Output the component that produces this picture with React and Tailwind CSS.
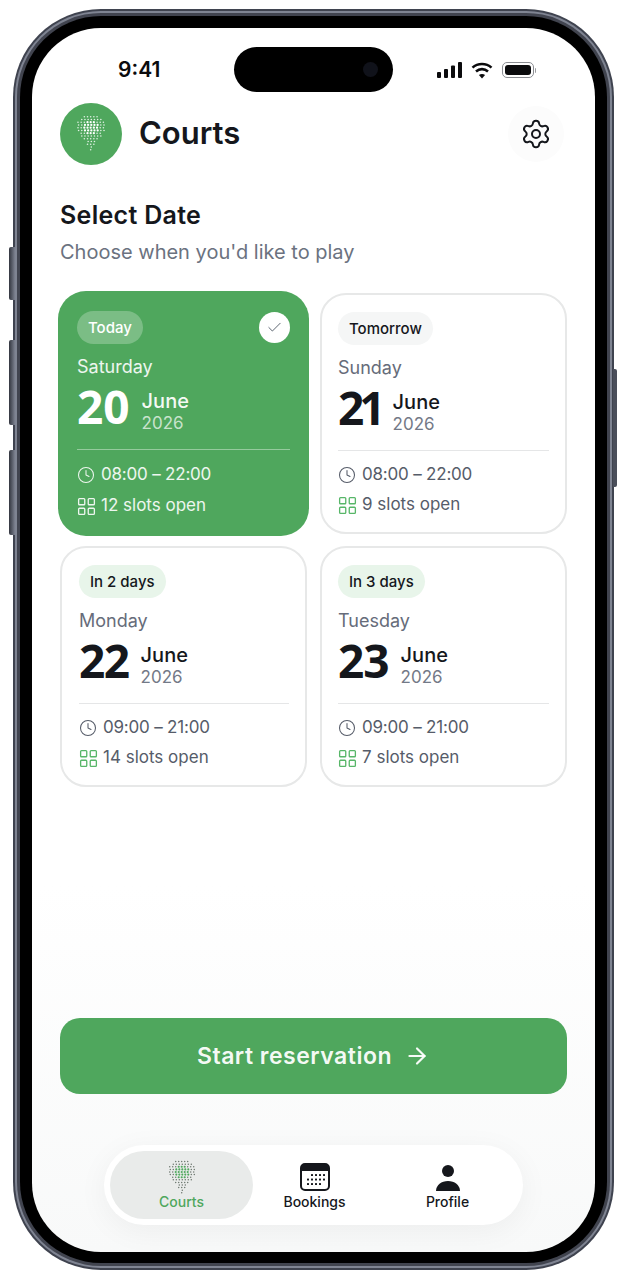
import { Settings, Clock, LayoutGrid, ArrowRight, Check } from 'lucide-react';

const days = [
  { badge: 'Today', weekday: 'Saturday', day: '20', hours: '08:00 – 22:00', slots: '12 slots open', selected: true, track: 'tracking-normal' },
  { badge: 'Tomorrow', weekday: 'Sunday', day: '21', hours: '08:00 – 22:00', slots: '9 slots open', neutral: true, pad: 'px-[16px]', track: 'tracking-[-5px]' },
  { badge: 'In 2 days', weekday: 'Monday', day: '22', hours: '09:00 – 21:00', slots: '14 slots open', pad: 'pl-[17px] pr-[16px]', track: 'tracking-[-1.500px]' },
  { badge: 'In 3 days', weekday: 'Tuesday', day: '23', hours: '09:00 – 21:00', slots: '7 slots open', pad: 'px-[16px]', track: 'tracking-[-1px]' },
];

// rows of the dotted racket logo: half-width of each row
const rows = [2, 3, 4, 4, 4, 4, 3, 3, 2, 1, 1, 0, 0];

function RacketDots({ className, color, core }) {
  const dots = [];
  rows.forEach((half, r) => {
    for (let c = -half; c <= half; c += 1) {
      const inner = Math.hypot(c, r - 4) < 2.6;
      dots.push(
        <circle
          key={`${r}-${c}`}
          cx={14 + c * 3 + (r % 2) * 0.6 - 0.3}
          cy={1.6 + r * 2.6}
          r={inner ? 1.05 : 0.75}
          fill={inner ? core : color}
        />
      );
    }
  });
  return (
    <svg viewBox="0 0 28 34" className={className}>
      {dots}
    </svg>
  );
}

function DayCard({ d }) {
  const sel = d.selected;
  const badge = sel
    ? 'bg-white/25 text-white'
    : d.neutral
      ? 'bg-[#f5f6f6] text-[#15171c]'
      : 'bg-[#e8f5ea] text-[#15171c]';
  return (
    <div
      className={
        sel
          ? '-mx-[2px] -my-[2px] h-[245px] rounded-[28px] bg-[#4fa75d] px-[19px] pt-[20px] text-white'
          : `h-[241px] rounded-[26px] border-2 border-[#e7e8e8] bg-white pt-[17px] ${d.pad}`
      }
    >
      <div className="flex h-[33px] items-center justify-between">
        <span className={`rounded-full px-[11px] py-[7px] text-[15px] leading-[19px] font-medium ${badge}`}>{d.badge}</span>
        {sel && (
          <span className="flex h-[31px] w-[31px] items-center justify-center rounded-full bg-white">
            <Check size={17} strokeWidth={1.4} className="text-[#5b6470]" />
          </span>
        )}
      </div>
      <p className={`mt-[11px] text-[18px] leading-[24px] ${sel ? 'text-white/90' : 'text-[#666c7a]'}`}>{d.weekday}</p>
      <div className="mt-[2px] flex h-[55px] items-center gap-[12px]">
        <span className={`-mt-[6px] font-['Open_Sans',sans-serif] text-[46px] leading-none font-bold ${d.track} ${sel ? 'text-white' : 'text-[#15171c]'}`}>{d.day}</span>
        <div className="pt-[7px]">
          <p className={`text-[20px] leading-[21px] font-medium ${sel ? 'text-white/95' : 'text-[#15171c]'}`}>June</p>
          <p className={`text-[17px] leading-[22px] ${sel ? 'text-white/70' : 'text-[#737987]'}`}>2026</p>
        </div>
      </div>
      <div className={`mt-[13px] h-px ${sel ? 'bg-white/40' : 'bg-[#e5e6e7]'}`} />
      <div className={`flex h-[24px] items-center gap-[6px] text-[17px] tracking-[-0.2px] ${sel ? 'mt-[13px] text-white/90' : 'mt-[12px] text-[#565c69]'}`}>
        <Clock size={18} strokeWidth={1.4} />
        <span>{d.hours}</span>
      </div>
      <div className={`flex h-[24px] items-center gap-[4px] text-[17px] ${sel ? 'mt-[7px] text-white/90' : 'mt-[6px] text-[#565c69]'}`}>
        <LayoutGrid size={21} strokeWidth={1.5} className={sel ? '-ml-[1px] text-white/90' : '-ml-[1px] text-[#57b668]'} />
        <span>{d.slots}</span>
      </div>
    </div>
  );
}

function StatusIcons() {
  return (
    <div className="flex items-center gap-[9px]">
      <svg width="25" height="16" viewBox="0 0 25 16" fill="#0b0b0d">
        <rect x="0" y="10" width="4" height="6" rx="1" />
        <rect x="7" y="7" width="4" height="9" rx="1" />
        <rect x="14" y="3.5" width="4" height="12.5" rx="1" />
        <rect x="21" y="0" width="4" height="16" rx="1" />
      </svg>
      <svg width="22" height="17" viewBox="0 0 22 17" fill="none" stroke="#0b0b0d" strokeWidth="2.6">
        <path d="M1.5 5.6C6.8 .8 15.200 .8 20.500 5.600" />
        <path d="M5 9.400c3.500-3 8.500-3 12 0" />
        <path d="M11 16.500 7.900 13.100c1.800-1.400 4.400-1.400 6.200 0z" fill="#0b0b0d" stroke="none" />
      </svg>
      <div className="flex items-center gap-px">
        <div className="h-[16px] w-[32px] rounded-[5px] border border-[#8b8d92] p-[2px]">
          <div className="h-full w-full rounded-[3px] bg-[#0b0b0d]" />
        </div>
        <div className="h-[5px] w-[1.500px] rounded-r-full bg-[#9a9ca0]" />
      </div>
    </div>
  );
}

function CalendarIcon() {
  return (
    <svg width="30" height="28" viewBox="0 0 30 28">
      <rect x="1" y="1" width="28" height="26" rx="4" fill="#fff" stroke="#15171c" strokeWidth="2" />
      <path d="M1 5a4 4 0 0 1 4-4h20a4 4 0 0 1 4 4v3H1z" fill="#15171c" />
      {[[12, 12], [16, 12], [20, 12], [24, 12], [8, 16.500], [12, 16.500], [16, 16.500], [20, 16.500], [24, 16.500], [8, 21], [12, 21], [16, 21], [20, 21]].map(([x, y]) => (
        <rect key={`${x}-${y}`} x={x - 1} y={y - 1} width="2" height="2" rx="0.5" fill="#15171c" />
      ))}
    </svg>
  );
}

function PersonIcon() {
  return (
    <svg width="26" height="27" viewBox="0 0 26 27" fill="#15171c">
      <circle cx="13" cy="7" r="6" />
      <path d="M1 27c0-6 5.500-10 12-10s12 4 12 10z" />
    </svg>
  );
}

function SideButton({ className }) {
  return <div className={`absolute w-[6px] rounded-l-[2px] bg-gradient-to-r from-[#33363f] to-[#7d8290] ${className}`} />;
}

export default function App() {
  return (
    <div className="min-h-[1280px] bg-white pt-[9px] pl-[13px] font-['Inter','Liberation_Sans',sans-serif]">
      <div className="relative h-[1261px] w-[601px] rounded-[88px] bg-[#3f434f] p-[2px]">
        <SideButton className="top-[238px] -left-[4px] h-[53px]" />
        <SideButton className="top-[331px] -left-[4px] h-[85px]" />
        <SideButton className="top-[441px] -left-[4px] h-[85px]" />
        <div className="absolute top-[360px] -right-[3px] h-[118px] w-[4px] rounded-r-[2px] bg-[#4a4e5a]" />

        <div className="h-full w-full rounded-[86px] bg-[#7f8492] p-[2px]">
          <div className="h-full w-full rounded-[84px] bg-[#41444f] p-[3px]">
            <div className="h-full w-full rounded-[81px] bg-black p-[12px] pb-[11px]">
              <div className="relative flex h-full flex-col overflow-hidden rounded-[69px] bg-gradient-to-b from-white from-70% to-[#f8f9f9] px-[28px]">
                {/* dynamic island */}
                <div className="absolute top-[19px] left-[202px] flex h-[45px] w-[159px] items-center justify-end rounded-full bg-black pr-[15px]">
                  <div className="h-[15px] w-[15px] rounded-full bg-[#10121a]" />
                </div>

                <div className="mt-[26px] flex h-[32px] items-center justify-between pr-[31px] pl-[58px]">
                  <span className="text-[21px] font-semibold text-[#0b0b0d]">9:41</span>
                  <StatusIcons />
                </div>

                <div className="mt-[17px] flex items-center justify-between">
                  <div className="flex items-center gap-[17px]">
                    <div className="flex h-[62px] w-[62px] items-center justify-center rounded-full bg-[#4fa75d]">
                      <RacketDots className="mb-[3px] h-[36px] w-[30px]" color="#e2f1e5" core="#ffffff" />
                    </div>
                    <h1 className="pb-[2px] text-[31px] font-semibold text-[#15171c]">Courts</h1>
                  </div>
                  <div className="mr-[3px] flex h-[56px] w-[56px] items-center justify-center rounded-full bg-[#fcfcfc]">
                    <Settings size={32} strokeWidth={1.5} className="text-[#15171c]" />
                  </div>
                </div>

                <h2 className="mt-[34px] text-[25px] leading-[32px] font-semibold tracking-[0.3px] text-[#15171c]">Select Date</h2>
                <p className="mt-[7px] text-[20px] leading-[28px] text-[#6b7280]">Choose when you'd like to play</p>

                <div className="mt-[27px] grid grid-cols-2 gap-x-[13px] gap-y-[12px]">
                  {days.map((d) => (
                    <DayCard key={d.day} d={d} />
                  ))}
                </div>

                <button className="mt-[231px] flex h-[76px] w-full items-center justify-center gap-[12px] rounded-[20px] bg-[#4fa75d] text-[23px] font-semibold tracking-[0.5px] text-white/95">
                  Start reservation
                  <ArrowRight size={26} strokeWidth={2} />
                </button>

                <div className="mx-auto mt-[51px] flex h-[80px] w-[419px] items-center rounded-full bg-white p-[6px] shadow-[0_6px_30px_rgba(0,0,0,0.05)]">
                  <div className="flex h-[68px] w-[143px] flex-col items-center justify-center rounded-full bg-[#e9ebea]">
                    <RacketDots className="h-[34px] w-[28px]" color="#6f7a72" core="#4fa75d" />
                    <span className="text-[14px] leading-[16px] font-medium text-[#4fa75d]">Courts</span>
                  </div>
                  <div className="flex w-[123px] flex-col items-center gap-[2px] pt-[4px] text-[#15171c]">
                    <CalendarIcon />
                    <span className="text-[14px] leading-[18px] font-medium">Bookings</span>
                  </div>
                  <div className="ml-[10px] flex w-[123px] flex-col items-center gap-[2px] pt-[4px] text-[#15171c]">
                    <PersonIcon />
                    <span className="text-[14px] leading-[18px] font-medium">Profile</span>
                  </div>
                </div>
              </div>
            </div>
          </div>
        </div>
      </div>
    </div>
  );
}
